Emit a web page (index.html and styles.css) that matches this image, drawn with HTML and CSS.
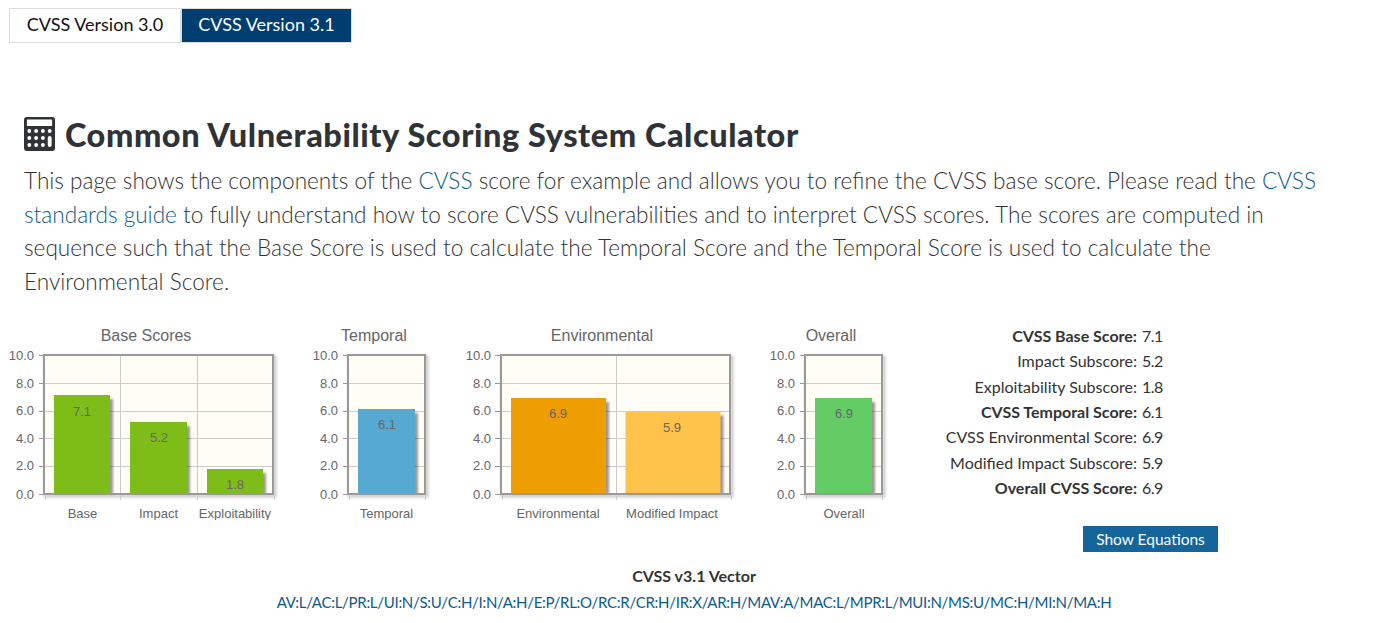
FILE: index.html
```html
<!DOCTYPE html>
<html lang="en">
<head>
    <meta charset="UTF-8">
    <meta name="viewport" content="width=device-width, initial-scale=1.0">
    <title>CVSS Calculator</title>
    <link rel="stylesheet" href="styles.css">
</head>
<body>
    <div class="tabs">
        <a class="tab" href="#">CVSS Version 3.0</a>
        <a class="tab tab-active" href="#">CVSS Version 3.1</a>
    </div>

    <div class="intro">
        <h1>
            <svg class="calc-icon" width="31" height="34" viewBox="0 0 32 34" preserveAspectRatio="none">
                <rect class="calc-body" width="32" height="34" rx="3"/>
                <rect class="calc-key" x="3" y="2.5" width="26" height="6.5"/>
                <g class="calc-key">
                    <circle cx="5.5" cy="14" r="2"/><circle cx="12.5" cy="14" r="2"/><circle cx="19.5" cy="14" r="2"/><circle cx="26.5" cy="14" r="2"/>
                    <circle cx="5.5" cy="21" r="2"/><circle cx="12.5" cy="21" r="2"/><circle cx="19.5" cy="21" r="2"/>
                    <circle cx="5.5" cy="28" r="2"/><circle cx="12.5" cy="28" r="2"/><circle cx="19.5" cy="28" r="2"/>
                    <rect x="24.5" y="19" width="4" height="11" rx="2"/>
                </g>
            </svg>
            Common Vulnerability Scoring System Calculator
        </h1>
        <p>This page shows the components of the <a href="#">CVSS</a> score for example and allows you to refine the CVSS base score. Please read the <a href="#">CVSS standards guide</a> to fully understand how to score CVSS vulnerabilities and to interpret CVSS scores. The scores are computed in sequence such that the Base Score is used to calculate the Temporal Score and the Temporal Score is used to calculate the Environmental Score.</p>
    </div>

    <div class="results">
        <svg class="chart" width="290" height="200" viewBox="0 0 290 200">
            <text class="chart-title" x="146" y="21">Base Scores</text>
            <g class="shadow">
                <rect x="45" y="37" width="230" height="139"/>
            </g>
            <rect class="plot" x="45" y="36" width="228" height="138"/>
            <path class="grid" d="M45 63.5H273M45 91.5H273M45 118.5H273M45 146.5H273M120.5 36V174M197.5 36V174"/>
            <path class="tick" d="M39 35.5H44M39 63.5H44M39 91.5H44M39 118.5H44M39 146.5H44M39 174.5H44"/>
            <path class="tick-x" d="M45.5 176V180M120.5 176V180M197.5 176V180M274.5 176V180"/>
            <g class="bar-shadow">
                <rect x="57" y="79" width="56" height="95"/>
                <rect x="133" y="106" width="57" height="68"/>
                <rect x="210" y="153" width="56" height="21"/>
            </g>
            <rect class="bar bar-green" x="54" y="75" width="56" height="99"/>
            <rect class="bar bar-green" x="130" y="102" width="57" height="72"/>
            <rect class="bar bar-green" x="207" y="149" width="56" height="25"/>
            <rect class="frame" x="44" y="35" width="229" height="139"/>
            <text class="point" x="82" y="96">7.1</text>
            <text class="point" x="159" y="122">5.2</text>
            <text class="point" x="235" y="169">1.8</text>
            <g class="y-label">
                <text x="34" y="40">10.0</text><text x="34" y="68">8.0</text><text x="34" y="95">6.0</text><text x="34" y="123">4.0</text><text x="34" y="150">2.0</text><text x="34" y="179">0.0</text>
            </g>
            <g class="x-label">
                <text x="82.5" y="198">Base</text><text x="158.5" y="198">Impact</text><text x="235" y="198">Exploitability</text>
            </g>
        </svg>

        <svg class="chart" width="150" height="200" viewBox="290 0 150 200">
            <text class="chart-title" x="374" y="21">Temporal</text>
            <g class="shadow">
                <rect x="349" y="37" width="78" height="139"/>
            </g>
            <rect class="plot" x="349" y="36" width="76" height="138"/>
            <path class="grid" d="M349 63.5H425M349 91.5H425M349 118.5H425M349 146.5H425"/>
            <path class="tick" d="M343 35.5H348M343 63.5H348M343 91.5H348M343 118.5H348M343 146.5H348M343 174.5H348"/>
            <path class="tick-x" d="M349.5 176V180M425.5 176V180"/>
            <g class="bar-shadow">
                <rect x="361" y="93" width="57" height="81"/>
            </g>
            <rect class="bar bar-blue" x="358" y="89" width="57" height="85"/>
            <rect class="frame" x="348" y="35" width="77" height="139"/>
            <text class="point" x="387" y="109">6.1</text>
            <g class="y-label">
                <text x="338" y="40">10.0</text><text x="338" y="68">8.0</text><text x="338" y="95">6.0</text><text x="338" y="123">4.0</text><text x="338" y="150">2.0</text><text x="338" y="179">0.0</text>
            </g>
            <g class="x-label">
                <text x="386.5" y="198">Temporal</text>
            </g>
        </svg>

        <svg class="chart" width="310" height="200" viewBox="440 0 310 200">
            <text class="chart-title" x="602" y="21">Environmental</text>
            <g class="shadow">
                <rect x="502" y="37" width="230" height="139"/>
            </g>
            <rect class="plot" x="502" y="36" width="228" height="138"/>
            <path class="grid" d="M502 63.5H730M502 91.5H730M502 118.5H730M502 146.5H730M616.5 36V174"/>
            <path class="tick" d="M495 35.5H500M495 63.5H500M495 91.5H500M495 118.5H500M495 146.5H500M495 174.5H500"/>
            <path class="tick-x" d="M502.5 176V180M616.5 176V180M731.5 176V180"/>
            <g class="bar-shadow">
                <rect x="514" y="82" width="95" height="92"/>
                <rect x="628.5" y="95.5" width="95" height="78.5"/>
            </g>
            <rect class="bar bar-orange" x="511" y="78" width="95" height="96"/>
            <rect class="bar bar-yellow" x="625.5" y="91.5" width="95" height="82.5"/>
            <rect class="frame" x="501" y="35" width="229" height="139"/>
            <text class="point" x="558" y="98">6.9</text>
            <text class="point" x="672" y="112">5.9</text>
            <g class="y-label">
                <text x="491" y="40">10.0</text><text x="491" y="68">8.0</text><text x="491" y="95">6.0</text><text x="491" y="123">4.0</text><text x="491" y="150">2.0</text><text x="491" y="179">0.0</text>
            </g>
            <g class="x-label">
                <text x="558" y="198">Environmental</text><text x="672" y="198">Modified Impact</text>
            </g>
        </svg>

        <svg class="chart" width="145" height="200" viewBox="750 0 145 200">
            <text class="chart-title" x="831" y="21">Overall</text>
            <g class="shadow">
                <rect x="806" y="37" width="78" height="139"/>
            </g>
            <rect class="plot" x="806" y="36" width="76" height="138"/>
            <path class="grid" d="M806 63.5H882M806 91.5H882M806 118.5H882M806 146.5H882"/>
            <path class="tick" d="M800 35.5H805M800 63.5H805M800 91.5H805M800 118.5H805M800 146.5H805M800 174.5H805"/>
            <path class="tick-x" d="M806.5 176V180M882.5 176V180"/>
            <g class="bar-shadow">
                <rect x="818" y="82" width="57" height="92"/>
            </g>
            <rect class="bar bar-lime" x="815" y="78" width="57" height="96"/>
            <rect class="frame" x="805" y="35" width="77" height="139"/>
            <text class="point" x="844" y="98">6.9</text>
            <g class="y-label">
                <text x="795" y="40">10.0</text><text x="795" y="68">8.0</text><text x="795" y="95">6.0</text><text x="795" y="123">4.0</text><text x="795" y="150">2.0</text><text x="795" y="179">0.0</text>
            </g>
            <g class="x-label">
                <text x="844" y="198">Overall</text>
            </g>
        </svg>

        <div class="scores">
            <div class="score-row"><b>CVSS Base Score:</b><span>7.1</span></div>
            <div class="score-row">Impact Subscore:<span>5.2</span></div>
            <div class="score-row">Exploitability Subscore:<span>1.8</span></div>
            <div class="score-row"><b>CVSS Temporal Score:</b><span>6.1</span></div>
            <div class="score-row">CVSS Environmental Score:<span>6.9</span></div>
            <div class="score-row">Modified Impact Subscore:<span>5.9</span></div>
            <div class="score-row"><b>Overall CVSS Score:</b><span>6.9</span></div>
            <button class="equations-btn">Show Equations</button>
        </div>
    </div>

    <div class="vector">
        <b>CVSS v3.1 Vector</b>
        <a href="#">AV:L/AC:L/PR:L/UI:N/S:U/C:H/I:N/A:H/E:P/RL:O/RC:R/CR:H/IR:X/AR:H/MAV:A/MAC:L/MPR:L/MUI:N/MS:U/MC:H/MI:N/MA:H</a>
    </div>
</body>
</html>
```

FILE: styles.css
```css
body {
    margin: 0;
    font-family: "Lato", "Noto Sans", sans-serif;
    color: #333;
    background: #fff;
}
a {
    color: #0e5a8a;
    text-decoration: none;
}

.tabs {
    display: flex;
    margin: 8px 0 0 9px;
}
.tab {
    box-sizing: border-box;
    width: 172px;
    height: 35px;
    line-height: 31px;
    text-align: center;
    font-size: 18px;
    color: #111;
    border: 1px solid #ddd;
}
.tab-active {
    width: 171px;
    color: #fff;
    background: #003e70;
}

.intro {
    width: 1320px;
    margin-left: 24px;
}
h1 {
    display: flex;
    align-items: center;
    gap: 10px;
    margin: 73px 0 0;
    height: 36px;
    font-size: 32.5px;
    font-weight: 900;
    letter-spacing: 0.55px;
    color: #2f3237;
}
.calc-body {
    fill: #2f3237;
}
.calc-key {
    fill: #fff;
}
.intro p {
    margin: 12px 0 0;
    font-size: 22.6px;
    font-weight: 300;
    line-height: 33.6px;
}

.results {
    display: flex;
    margin-top: 22px;
    height: 232px;
}
.chart {
    display: block;
    flex: none;
    font-family: "Liberation Sans", sans-serif;
}
.chart text {
    text-anchor: middle;
    font-size: 13px;
    fill: #666;
}
.chart .chart-title {
    font-size: 16px;
}
.chart .y-label text {
    text-anchor: end;
}
.shadow rect {
    fill: none;
    stroke: rgba(0, 0, 0, 0.2);
    stroke-width: 3;
    filter: blur(0.8px);
}
.plot {
    fill: #fffdf6;
}
.grid {
    fill: none;
    stroke: #ccc;
    stroke-width: 1;
}
.tick {
    fill: none;
    stroke: #999;
    stroke-width: 1;
}
.tick-x {
    fill: none;
    stroke: #ccc;
    stroke-width: 1;
}
.frame {
    fill: none;
    stroke: #999;
    stroke-width: 2;
}
.bar-shadow rect {
    fill: rgba(0, 0, 0, 0.4);
    filter: blur(1px);
}
.bar-green { fill: #7ebd17; }
.bar-blue { fill: #56a9d0; }
.bar-orange { fill: #ee9e00; }
.bar-yellow { fill: #ffc24a; }
.bar-lime { fill: #64cc64; }

.scores {
    width: 323px;
    padding-top: 2.5px;
    display: flex;
    flex-direction: column;
    align-items: flex-end;
    font-size: 16px;
}
.score-row {
    height: 25.4px;
    line-height: 25.4px;
    width: 247px;
    white-space: nowrap;
    display: flex;
    justify-content: flex-end;
    margin-right: 56px;
}
.score-row span {
    width: 20px;
    margin-left: 5px;
    letter-spacing: -0.5px;
}
.equations-btn {
    width: 135px;
    height: 26px;
    margin-top: 25.7px;
    padding: 0;
    border: 0;
    font-family: inherit;
    font-size: 15.5px;
    color: #fff;
    background: #14659c;
}

.vector {
    margin-top: 11px;
    text-align: center;
    font-size: 16px;
    padding-left: 7px;
}
.vector b {
    display: block;
    line-height: 26px;
}
.vector a {
    display: block;
    line-height: 26px;
    font-size: 15px;
    letter-spacing: -0.29px;
}
```
